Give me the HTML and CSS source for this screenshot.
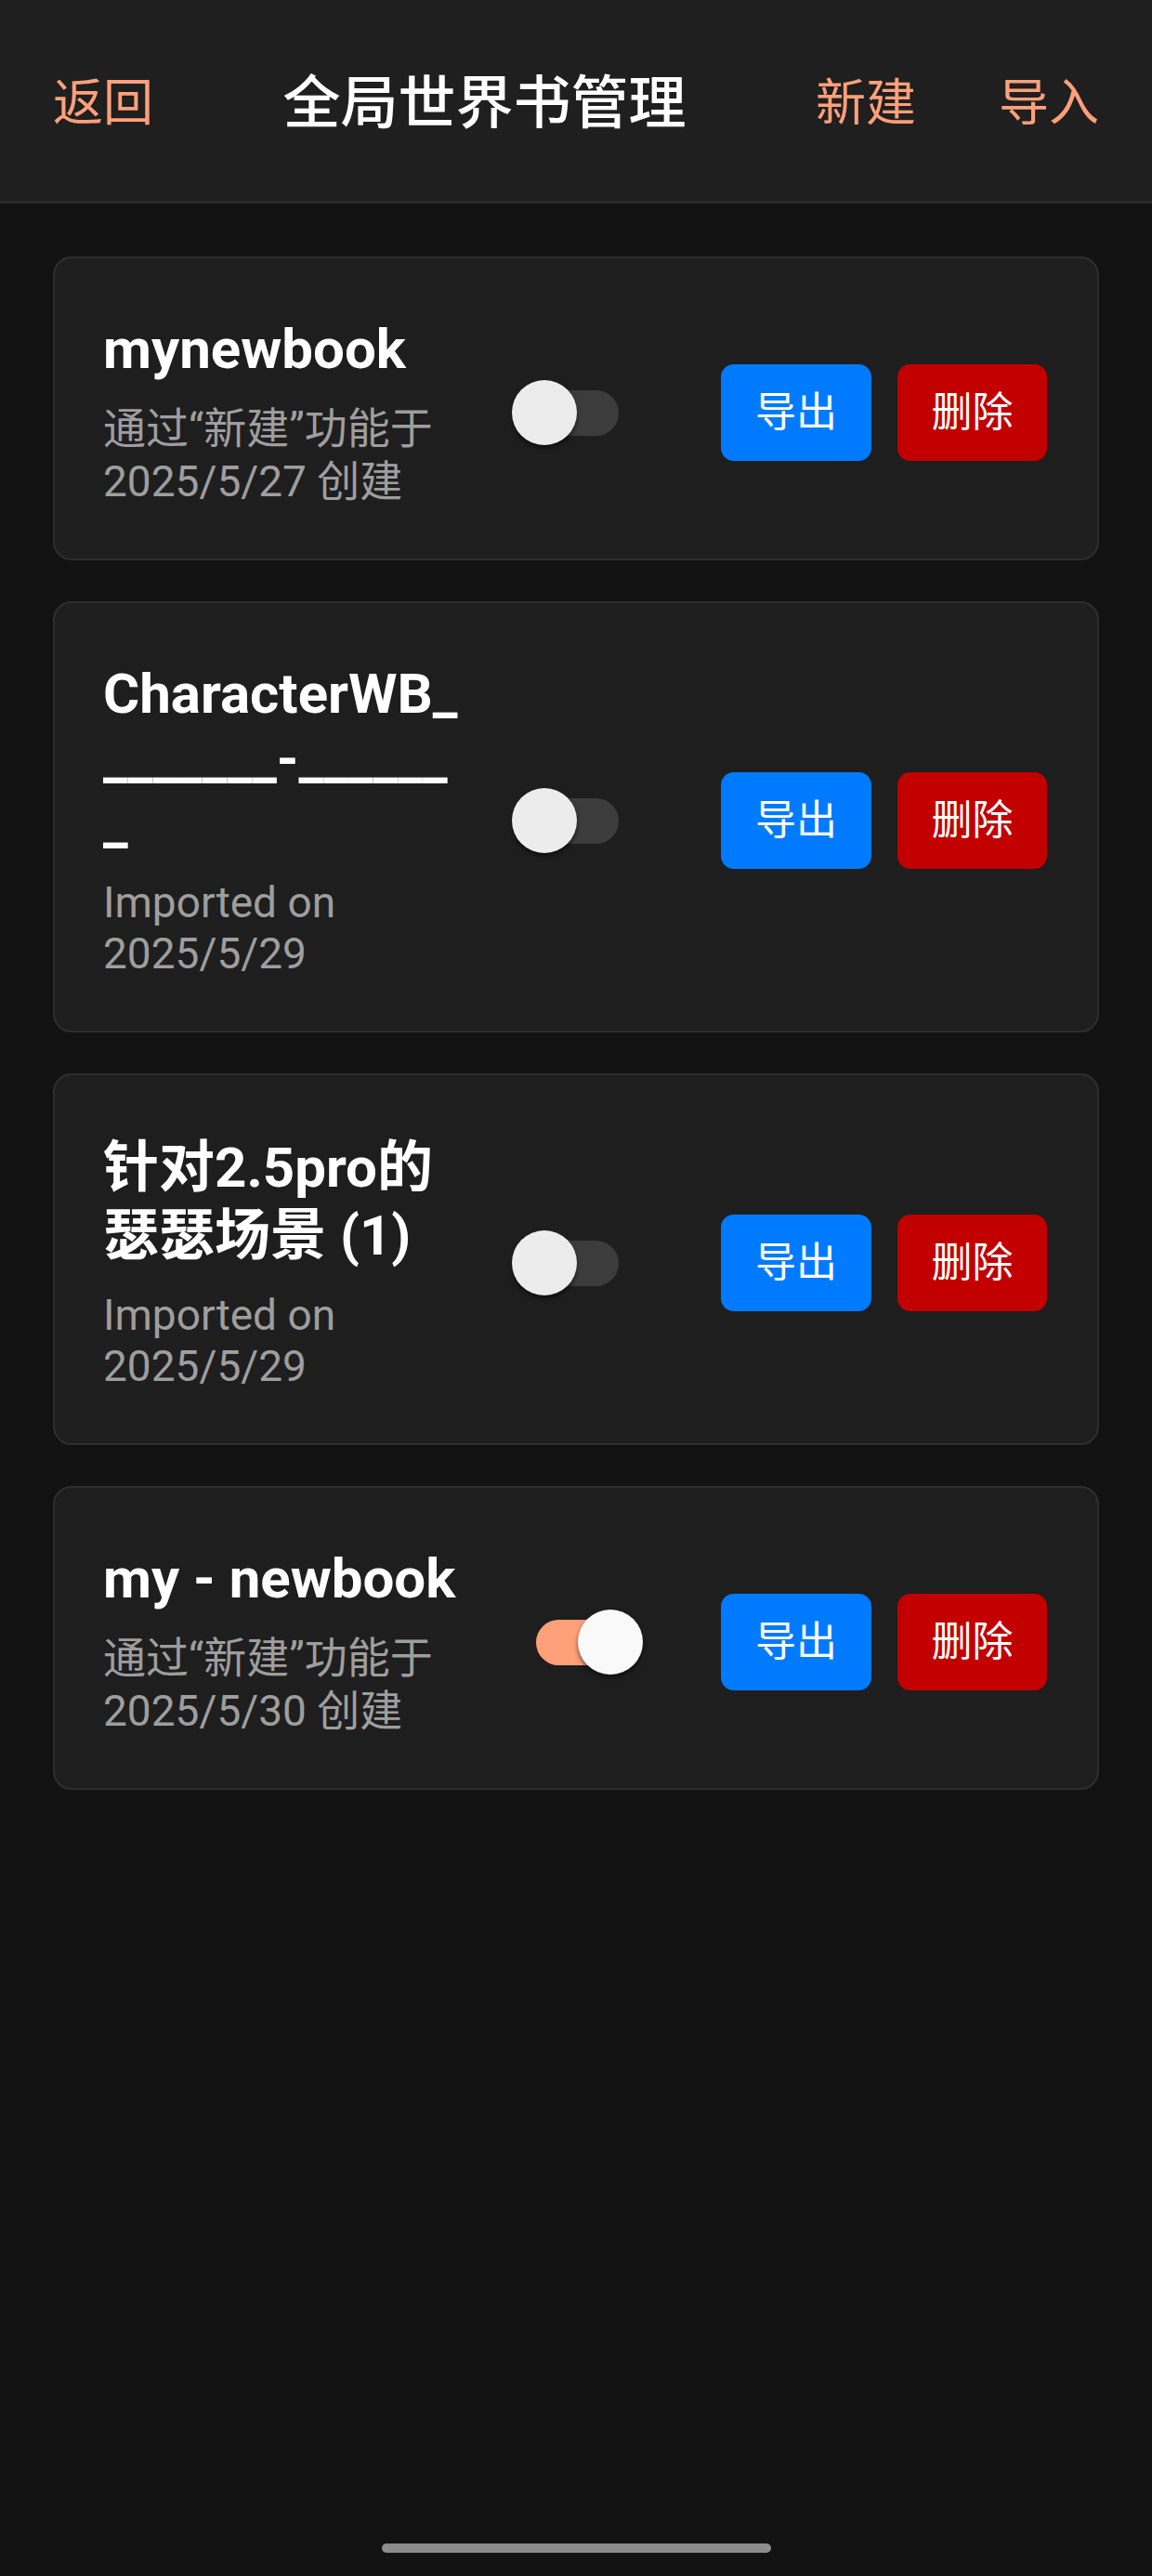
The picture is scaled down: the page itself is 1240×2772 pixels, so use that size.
FILE: index.html
```html
<!DOCTYPE html>
<html lang="zh-CN">
<head>
<meta charset="utf-8">
<title>全局世界书管理</title>
<link rel="stylesheet" href="styles.css">
</head>
<body>
<header class="topbar">
  <button class="nav-link">返回</button>
  <h1 class="topbar-title">全局世界书管理</h1>
  <div class="topbar-actions">
    <button class="nav-link">新建</button>
    <button class="nav-link">导入</button>
  </div>
</header>

<main class="book-list">
  <article class="book-card">
    <div class="book-info">
      <h2 class="book-name">mynewbook</h2>
      <p class="book-meta book-meta--cjk">通过“新建”功能于 2025/5/27 创建</p>
    </div>
    <span class="switch"><span class="switch-track"></span><span class="switch-thumb"></span></span>
    <div class="book-actions">
      <button class="btn btn-export">导出</button>
      <button class="btn btn-delete">删除</button>
    </div>
  </article>

  <article class="book-card">
    <div class="book-info">
      <h2 class="book-name">CharacterWB________-_______</h2>
      <p class="book-meta">Imported on 2025/5/29</p>
    </div>
    <span class="switch"><span class="switch-track"></span><span class="switch-thumb"></span></span>
    <div class="book-actions">
      <button class="btn btn-export">导出</button>
      <button class="btn btn-delete">删除</button>
    </div>
  </article>

  <article class="book-card">
    <div class="book-info">
      <h2 class="book-name book-name--cjk">针对2.5pro的瑟瑟场景 (1)</h2>
      <p class="book-meta">Imported on 2025/5/29</p>
    </div>
    <span class="switch"><span class="switch-track"></span><span class="switch-thumb"></span></span>
    <div class="book-actions">
      <button class="btn btn-export">导出</button>
      <button class="btn btn-delete">删除</button>
    </div>
  </article>

  <article class="book-card">
    <div class="book-info">
      <h2 class="book-name">my - newbook</h2>
      <p class="book-meta book-meta--cjk">通过“新建”功能于 2025/5/30 创建</p>
    </div>
    <span class="switch is-on"><span class="switch-track"></span><span class="switch-thumb"></span></span>
    <div class="book-actions">
      <button class="btn btn-export">导出</button>
      <button class="btn btn-delete">删除</button>
    </div>
  </article>
</main>

<footer class="gesture-bar"><span class="gesture-handle"></span></footer>
</body>
</html>
```

FILE: styles.css
```css
* {
  box-sizing: border-box;
}

html, body {
  margin: 0;
  padding: 0;
}

body {
  background: #121212;
  color: #ffffff;
  font-family: Roboto, "Noto Sans CJK SC", sans-serif;
  min-height: 2772px;
  display: flex;
  flex-direction: column;
}

/* ---------- top bar ---------- */
.topbar {
  height: 219px;
  background: #1f1f1f;
  border-bottom: 3px solid #2b2b2b;
  display: flex;
  align-items: center;
  padding: 8px 57px 0 57px;
  flex: none;
}

.nav-link {
  background: none;
  border: none;
  padding: 0;
  margin: 0;
  font-family: Roboto, "Noto Sans CJK SC", sans-serif;
  font-size: 54px;
  line-height: 60px;
  color: #ffa07a;
  font-weight: 400;
}

.topbar-title {
  flex: 1;
  margin: 0;
  text-align: center;
  font-size: 62px;
  line-height: 72px;
  font-weight: 500;
  color: #ffffff;
}

.topbar-actions {
  display: flex;
  gap: 89px;
}

/* ---------- list ---------- */
.book-list {
  flex: 1;
  padding: 57px 57px 0 57px;
  display: flex;
  flex-direction: column;
  gap: 44px;
}

.book-card {
  background: #1e1e1e;
  border: 2px solid #2e2e2e;
  border-radius: 20px;
  padding: 63px 54px 55px 52px;
  display: flex;
  align-items: center;
}

.book-info {
  flex: 1;
  min-width: 0;
}

.book-name {
  margin: 0 0 22px 0;
  font-size: 60px;
  line-height: 70px;
  font-weight: 700;
  color: #ffffff;
  word-break: break-all;
}

.book-name--cjk {
  line-height: 73px;
}

.book-meta {
  margin: 0;
  font-size: 46px;
  line-height: 55px;
  color: #9e9e9e;
}

.book-meta--cjk {
  line-height: 56.5px;
}

/* ---------- switch ---------- */
.switch {
  position: relative;
  flex: none;
  width: 141px;
  height: 70px;
  margin: 0 84px 0 50px;
}

.switch-track {
  position: absolute;
  left: 26px;
  top: 11px;
  width: 89px;
  height: 49px;
  border-radius: 25px;
  background: #3c3c3c;
}

.switch-thumb {
  position: absolute;
  left: 0;
  top: 0;
  width: 70px;
  height: 70px;
  border-radius: 50%;
  background: #ececec;
  box-shadow: 0 3px 5px rgba(0, 0, 0, 0.55);
}

.switch.is-on .switch-track {
  background: #ffa07a;
}

.switch.is-on .switch-thumb {
  left: 71px;
  background: #f9f9f9;
}

/* ---------- buttons ---------- */
.book-actions {
  display: flex;
  gap: 28px;
  flex: none;
}

.btn {
  border: none;
  margin: 0;
  width: 162px;
  height: 104px;
  padding: 0;
  border-radius: 14px;
  font-family: Roboto, "Noto Sans CJK SC", sans-serif;
  font-size: 44px;
  line-height: 48px;
  color: #ffffff;
}

.btn-export {
  background: #007bff;
}

.btn-delete {
  background: #c20000;
  width: 161px;
}

/* ---------- gesture bar ---------- */
.gesture-bar {
  flex: none;
  display: flex;
  justify-content: center;
  padding-bottom: 25px;
}

.gesture-handle {
  width: 419px;
  height: 10px;
  border-radius: 5px;
  background: #8c8c8c;
}
```
